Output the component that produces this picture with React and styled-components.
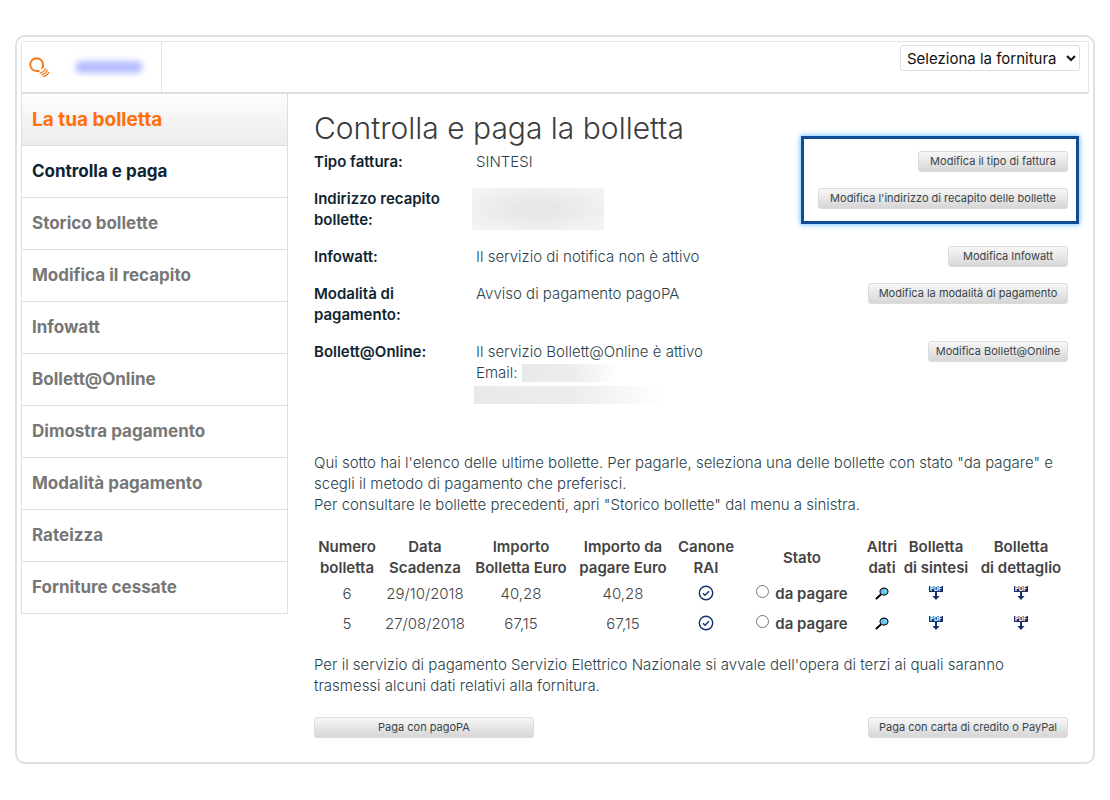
import React from "react";
import styled, { createGlobalStyle } from "styled-components";

const GlobalStyle = createGlobalStyle`
  *,
  *::after {
    box-sizing: border-box;
  }

  body {
    margin: 0;
    background: #fff;
    color: #2b3f4b;
    font-family: "Inter", "Open Sans", sans-serif;
    font-size: 15px;
    line-height: 21px;
  }
`;

const Frame = styled.div`
  margin: 35px 15px;
  padding: 4px 4px 24px;
  border: 2px solid #dee0e2;
  border-radius: 10px;
`;

const Header = styled.header`
  display: flex;
  justify-content: space-between;
  align-items: flex-start;
  height: 53px;
  border: 1px solid #e3e5e7;
  border-bottom: 2px solid #dcdee0;
`;

const Brand = styled.div`
  display: flex;
  align-items: center;
  gap: 26px;
  width: 140px;
  height: 100%;
  padding-left: 6px;
  border-right: 1px solid #e0e4e8;
`;

const CustomerCode = styled.span`
  width: 66px;
  height: 12px;
  border-radius: 4px;
  background: #b4bcff;
  filter: blur(3px);
`;

const SupplySelect = styled.select`
  width: 180px;
  height: 26px;
  margin: 3px 8px 0 0;
  padding: 0 2px;
  border: 1px solid #dcdee0;
  border-radius: 3px;
  background: #fff;
  color: #111;
  font-family: inherit;
  font-size: 15px;
`;

const Columns = styled.div`
  display: flex;
  align-items: flex-start;
`;

const Sidebar = styled.nav`
  flex: 0 0 267px;
  border: 1px solid #dcdee0;
  border-top: 0;
`;

const SidebarTitle = styled.h2`
  height: 51px;
  margin: 0;
  padding-left: 10px;
  background: linear-gradient(#fdfdfd, #ececec);
  color: #ff6f0a;
  font-size: 19px;
  font-weight: 700;
  line-height: 51px;
`;

const SidebarLink = styled.a`
  display: block;
  height: 52px;
  padding-left: 10px;
  border-top: 1px solid #dcdee0;
  color: ${({ $active }) => ($active ? "#0f2433" : "#777")};
  font-size: 17px;
  font-weight: 700;
  line-height: 51px;
  text-decoration: none;
`;

const Main = styled.main`
  flex: 1;
  min-width: 0;
  padding: 13px 21px 0 26px;
`;

const Title = styled.h1`
  margin: 0 0 2px;
  color: #3c3c3c;
  font-size: 30px;
  font-weight: 300;
  line-height: 42px;
`;

const Details = styled.section`
  display: grid;
  gap: 16px;
  margin-bottom: 45px;
`;

const EditableDetails = styled.div`
  position: relative;
  display: grid;
  gap: 16px;

  &::after {
    content: "";
    position: absolute;
    top: -15px;
    right: -11px;
    width: 278px;
    height: 88px;
    border: 3px solid #124d93;
    box-shadow: 0 0 5px 1px #7cc8ff;
    pointer-events: none;
  }
`;

const Detail = styled.div`
  display: grid;
  grid-template-columns: 146px 1fr auto;
  column-gap: 16px;
  align-items: start;
`;

const DetailLabel = styled.div`
  color: #10242f;
  font-weight: 600;
`;

const DetailValue = styled.div`
  font-weight: 300;
`;

const HiddenAddress = styled.div`
  width: 132px;
  height: 42px;
  margin-left: -4px;
  background: radial-gradient(ellipse at center, #e6e8e8 20%, #f2f3f3 85%);
`;

const EmailLine = styled.div`
  display: flex;
  align-items: center;
  gap: 4px;
`;

const HiddenText = styled.span`
  display: block;
  width: ${({ $width }) => $width}px;
  height: 18px;
  background: linear-gradient(90deg, #e8eaea, #eceded 55%, #fff);
`;

const HiddenLine = styled.div`
  display: flex;
  align-items: center;
  height: 24px;
  margin-left: -2px;
`;

const Button = styled.button`
  width: ${({ $width }) => $width}px;
  height: 21px;
  padding: 0;
  border: 1px solid #dcdcdc;
  border-radius: 3px;
  background: linear-gradient(#f7f7f7, #d6d6d6);
  color: #3a444a;
  font-family: inherit;
  font-size: 11px;
  line-height: 17px;
  white-space: nowrap;
`;

const Text = styled.p`
  margin: 0;
  font-weight: 300;
`;

const Bills = styled.table`
  width: 100%;
  margin: 21px 0 16px;
  border-collapse: collapse;
  table-layout: fixed;
  color: #444;
  text-align: center;
`;

const HeadCell = styled.th`
  width: ${({ $width }) => $width}px;
  padding: 0;
  font-weight: 600;
  white-space: nowrap;
`;

const Cell = styled.td`
  height: 30px;
  padding: 0;
  font-weight: 300;

  svg {
    display: block;
    margin: 0 auto;
  }
`;

const Status = styled.label`
  display: flex;
  justify-content: center;
  align-items: center;
  gap: 6px;
  font-weight: 600;

  input {
    margin: 0 0 3px;
  }
`;

const Actions = styled.div`
  display: flex;
  justify-content: space-between;
  margin-top: 21px;
`;

const BulbLogo = () => (
  <svg width="22" height="22" viewBox="0 0 22 22" fill="none" stroke="#f07818">
    <path
      d="M10.8 15H8.6A6.4 6.4 0 1 1 15 8.6V10.6L14 12"
      strokeWidth="1.9"
      strokeLinecap="round"
      strokeLinejoin="round"
    />
    <path
      d="M12.2 16.8c2.4-.4 4.6-2 5.2-4.2M13.8 18.6c2.6-.4 4.8-2.2 5.4-4.4M15.4 20.4c2.4-.4 4.6-2 5.2-4"
      strokeWidth="1.3"
      strokeLinecap="round"
    />
  </svg>
);

const CheckIcon = () => (
  <svg width="16" height="16" viewBox="0 0 16 16" fill="none" stroke="#14316b">
    <circle cx="8" cy="8" r="6.7" strokeWidth="1.4" />
    <path d="M5 8.2l2 2 4-4" strokeWidth="1.5" />
  </svg>
);

const LensIcon = () => (
  <svg width="14" height="14" viewBox="0 0 14 14">
    <path
      d="M1.5 12.5l4.3-4"
      stroke="#000"
      strokeWidth="2"
      strokeLinecap="round"
    />
    <ellipse
      cx="9"
      cy="5.6"
      rx="4"
      ry="3.5"
      fill="#62c6f2"
      stroke="#111"
      strokeWidth="1.1"
    />
    <path d="M9.6 4l1.6 1.6" stroke="#e8f8ff" />
  </svg>
);

const PdfIcon = () => (
  <svg width="14" height="14" viewBox="0 0 14 14">
    <path d="M0 0h14v6H0z" fill="#14316b" />
    <text
      x="7"
      y="5"
      fill="#fff"
      fontSize="6"
      fontWeight="800"
      textAnchor="middle"
    >
      PDF
    </text>
    <path d="M6 6h2v4h2.6L7 14 3.4 10H6z" fill="#14316b" />
  </svg>
);

const links = [
  "Controlla e paga",
  "Storico bollette",
  "Modifica il recapito",
  "Infowatt",
  "Bollett@Online",
  "Dimostra pagamento",
  "Modalità pagamento",
  "Rateizza",
  "Forniture cessate",
];

const columns = [
  [66, "Numero", "bolletta"],
  [90, "Data", "Scadenza"],
  [102, "Importo", "Bolletta Euro"],
  [102, "Importo da", "pagare Euro"],
  [64, "Canone", "RAI"],
  [128, "Stato"],
  [32, "Altri", "dati"],
  [76, "Bolletta", "di sintesi"],
  [94, "Bolletta", "di dettaglio"],
];

const bills = [
  { number: 6, date: "29/10/2018", amount: "40,28" },
  { number: 5, date: "27/08/2018", amount: "67,15" },
];

const DetailRow = ({ label, action, width, children }) => (
  <Detail>
    <DetailLabel>{label}</DetailLabel>
    <DetailValue>{children}</DetailValue>
    <Button $width={width}>{action}</Button>
  </Detail>
);

export default () => (
  <>
    <GlobalStyle />
    <Frame>
      <Header>
        <Brand>
          <BulbLogo />
          <CustomerCode />
        </Brand>
        <SupplySelect aria-label="Fornitura">
          <option>Seleziona la fornitura</option>
        </SupplySelect>
      </Header>
      <Columns>
        <Sidebar>
          <SidebarTitle>La tua bolletta</SidebarTitle>
          {links.map((link, i) => (
            <SidebarLink key={link} href="#" $active={i === 0}>
              {link}
            </SidebarLink>
          ))}
        </Sidebar>
        <Main>
          <Title>Controlla e paga la bolletta</Title>
          <Details>
            <EditableDetails>
              <DetailRow
                label="Tipo fattura:"
                action="Modifica il tipo di fattura"
                width={150}
              >
                SINTESI
              </DetailRow>
              <DetailRow
                label="Indirizzo recapito bollette:"
                action="Modifica l'indirizzo di recapito delle bollette"
                width={250}
              >
                <HiddenAddress />
              </DetailRow>
            </EditableDetails>
            <DetailRow label="Infowatt:" action="Modifica Infowatt" width={120}>
              Il servizio di notifica non è attivo
            </DetailRow>
            <DetailRow
              label="Modalità di pagamento:"
              action="Modifica la modalità di pagamento"
              width={200}
            >
              Avviso di pagamento pagoPA
            </DetailRow>
            <DetailRow
              label="Bollett@Online:"
              action="Modifica Bollett@Online"
              width={140}
            >
              Il servizio Bollett@Online è attivo
              <EmailLine>
                Email: <HiddenText $width={96} />
              </EmailLine>
              <HiddenLine>
                <HiddenText $width={188} />
              </HiddenLine>
            </DetailRow>
          </Details>
          <Text>
            Qui sotto hai l'elenco delle ultime bollette. Per pagarle, seleziona
            una delle bollette con stato "da pagare" e scegli il metodo di
            pagamento che preferisci.
            <br />
            Per consultare le bollette precedenti, apri "Storico bollette" dal
            menu a sinistra.
          </Text>
          <Bills>
            <thead>
              <tr>
                {columns.map(([width, first, second], i) => (
                  <HeadCell key={i} $width={width} scope="col">
                    {first}
                    {second && <br />}
                    {second}
                  </HeadCell>
                ))}
              </tr>
            </thead>
            <tbody>
              {bills.map(({ number, date, amount }) => (
                <tr key={number}>
                  <Cell>{number}</Cell>
                  <Cell>{date}</Cell>
                  <Cell>{amount}</Cell>
                  <Cell>{amount}</Cell>
                  <Cell>
                    <CheckIcon />
                  </Cell>
                  <Cell>
                    <Status>
                      <input type="radio" name="bill" value={number} />
                      da pagare
                    </Status>
                  </Cell>
                  <Cell>
                    <LensIcon />
                  </Cell>
                  <Cell>
                    <PdfIcon />
                  </Cell>
                  <Cell>
                    <PdfIcon />
                  </Cell>
                </tr>
              ))}
            </tbody>
          </Bills>
          <Text>
            Per il servizio di pagamento Servizio Elettrico Nazionale si avvale
            dell'opera di terzi ai quali saranno
            <br />
            trasmessi alcuni dati relativi alla fornitura.
          </Text>
          <Actions>
            <Button $width={220}>Paga con pagoPA</Button>
            <Button $width={200}>Paga con carta di credito o PayPal</Button>
          </Actions>
        </Main>
      </Columns>
    </Frame>
  </>
);
